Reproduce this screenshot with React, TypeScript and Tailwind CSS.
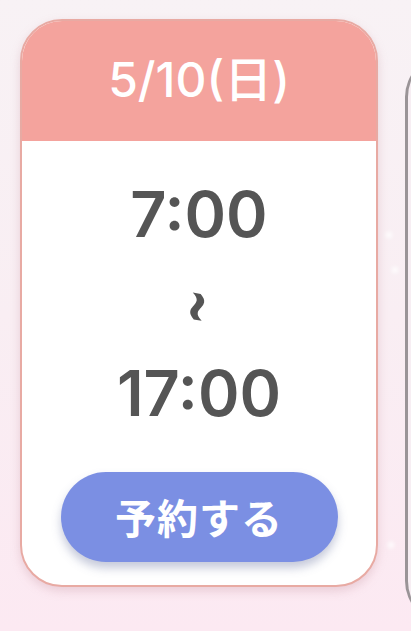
import React from 'react';

const font = { fontFamily: 'Inter, "Noto Sans CJK JP", "Noto Sans", sans-serif' };

function Sparkle({ className }: { className: string }) {
  return <div className={`absolute w-[6px] h-[6px] rounded-full bg-white blur-[2px] ${className}`} />;
}

function SlotCard() {
  return (
    <div className="w-[358px] h-[568px] shrink-0 rounded-[42px] border-2 border-[#e8aaa3] bg-white overflow-hidden flex flex-col shadow-[0_4px_10px_rgba(200,150,160,0.35)]">
      {/* Date header */}
      <div className="h-[120px] shrink-0 bg-[#f4a39d] flex items-center justify-center">
        <span className="text-[48px] font-medium text-white leading-none -mt-[2px]">5/10(日)</span>
      </div>

      {/* Times */}
      <div className="flex-1 flex flex-col items-center text-[#555555]">
        <span className="mt-[42px] text-[63px] font-semibold leading-none">7:00</span>
        <span
          className="mt-[46px] h-[30px] flex items-center justify-center text-[42px] font-black leading-none rotate-[100deg] scale-y-[1.6]"
          style={{ fontFamily: '"DejaVu Sans", sans-serif' }}
        >
          ~
        </span>
        <span className="mt-[40px] text-[63px] font-semibold leading-none">17:00</span>

        {/* Reserve button */}
        <button
          className="mt-[47px] w-[277px] h-[90px] rounded-full bg-[#7b8fe3] text-white text-[41px] font-bold tracking-[1px] shadow-[0_6px_10px_rgba(90,100,150,0.35)]"
          style={{ fontFamily: '"Noto Sans CJK JP", sans-serif' }}
        >
          予約する
        </button>
      </div>
    </div>
  );
}

export default function App() {
  return (
    <div
      className="relative w-[411px] h-[631px] overflow-hidden bg-gradient-to-b from-[#f8f2f5] via-[#f9eef3] to-[#fce9f2]"
      style={font}
    >
      <div className="flex gap-[27px] pl-[20px] pt-[19px]">
        <SlotCard />
        <div className="w-[358px] h-[568px] shrink-0 mt-[36px] rounded-[42px] border-l-[3px] border-[#9a9497] bg-[#f7eef3]" />
      </div>
      <Sparkle className="left-[386px] top-[232px]" />
      <Sparkle className="left-[392px] top-[267px]" />
      <Sparkle className="left-[388px] top-[542px]" />
    </div>
  );
}
